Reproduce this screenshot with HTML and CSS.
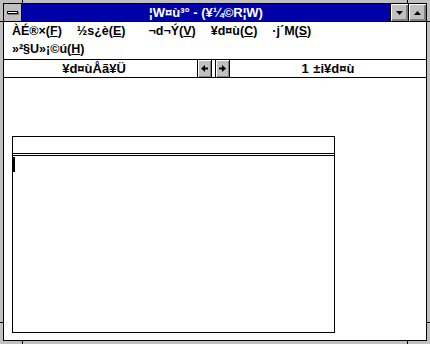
FILE: index.html
```html
<!DOCTYPE html>
<html lang="en">
<head>
    <meta charset="UTF-8">
    <meta name="viewport" content="width=device-width, initial-scale=1.0">
    <title>Cardfile</title>
    <link rel="stylesheet" href="styles.css">
</head>
<body>
    <div class="window">
        <div class="inner">
            <div class="titlebar">
                <div class="sysmenu"><span class="dash"></span></div>
                <div class="title">¦W¤ù³° - (¥¼©R¦W)</div>
                <div class="tbtn">
                    <svg width="7" height="4" viewBox="0 0 7 4"><path d="M0 0H7L3.5 4Z" fill="#000"/></svg>
                </div>
                <div class="tbtn">
                    <svg width="7" height="4" viewBox="0 0 7 4"><path d="M0 4H7L3.5 0Z" fill="#000"/></svg>
                </div>
            </div>
            <div class="menu">
                <div class="menu-row">
                    <span class="item">ÀÉ®×(<u>F</u>)</span>
                    <span class="item edit">½s¿è(<u>E</u>)</span>
                    <span class="item">¬d¬Ý(<u>V</u>)</span>
                    <span class="item">¥d¤ù(<u>C</u>)</span>
                    <span class="item">·j´M(<u>S</u>)</span>
                </div>
                <div class="menu-row">
                    <span class="item">»²§U»¡©ú(<u>H</u>)</span>
                </div>
            </div>
            <div class="toolbar">
                <div class="view-label">¥d¤ùÅã¥Ü</div>
                <div class="arrows">
                    <div class="abtn">
                        <svg width="7" height="7" viewBox="0 0 7 7"><path d="M0 3.5L4 0V2.5H7V4.5H4V7Z" fill="#000"/></svg>
                    </div>
                    <div class="abtn">
                        <svg width="7" height="7" viewBox="0 0 7 7"><path d="M7 3.5L3 0V2.5H0V4.5H3V7Z" fill="#000"/></svg>
                    </div>
                </div>
                <div class="count">1 ±i¥d¤ù</div>
            </div>
            <div class="client">
                <div class="card">
                    <div class="card-head"></div>
                    <div class="card-body"><span class="caret"></span></div>
                </div>
            </div>
        </div>
    </div>
</body>
</html>
```

FILE: styles.css
```css
body {
    margin: 0;
    padding: 0;
    font-family: "Liberation Sans", Arial, sans-serif;
    font-weight: bold;
    font-size: 12px;
    background-color: #fff;
}
.window {
    width: 430px;
    height: 344px;
    box-sizing: border-box;
    padding: 3px;
    background-color: #c0c0c0;
    /* little notches on the frame corners */
    background-image:
        linear-gradient(#000, #000),
        linear-gradient(#000, #000),
        linear-gradient(#000, #000),
        linear-gradient(#000, #000);
    background-repeat: no-repeat;
    background-size: 1px 100%, 1px 100%, 100% 1px, 100% 1px;
    background-position: 22px 0, 407px 0, 0 21px, 0 322px;
}
.inner {
    height: 100%;
    box-sizing: border-box;
    border: 1px solid #000;
    display: flex;
    flex-direction: column;
    background-color: #fff;
}
.titlebar {
    display: flex;
    height: 17px;
    border-bottom: 1px solid #000;
    background-color: #0000a8;
    color: #fff;
}
.sysmenu {
    width: 17px;
    background-color: #c0c0c0;
    border-right: 1px solid #000;
    display: flex;
    align-items: center;
    justify-content: center;
}
.dash {
    width: 9px;
    height: 1px;
    background-color: #fff;
    border: 1px solid #000;
    box-shadow: 1px 1px 0 #808080;
}
.title {
    flex: 1;
    text-align: center;
    line-height: 17px;
    font-size: 13px;
}
.tbtn {
    width: 17px;
    border-left: 1px solid #000;
    background-color: #c0c0c0;
    box-shadow: inset 1px 1px 0 #fff, inset -1px -1px 0 #808080, inset -2px -2px 0 #808080;
    display: flex;
    align-items: center;
    justify-content: center;
}
.menu {
    padding-bottom: 1px;
}
.menu-row {
    display: flex;
    height: 18px;
    line-height: 18px;
    font-size: 12.5px;
    padding-left: 1px;
}
.item {
    padding: 0 7px;
    margin-right: 1px;
    color: #000;
}
.item.edit {
    padding-right: 15px;
}
.toolbar {
    display: flex;
    height: 17px;
    border-top: 1px solid #000;
    border-bottom: 1px solid #000;
    line-height: 17px;
    font-size: 13px;
}
.view-label {
    width: 180px;
    text-align: center;
}
.arrows {
    display: flex;
    gap: 3px;
    margin-left: 13px;
}
.abtn {
    width: 13px;
    border-left: 1px solid #000;
    border-right: 1px solid #000;
    background-color: #c0c0c0;
    box-shadow: inset 1px 1px 0 #fff, inset -1px -1px 0 #808080;
    display: flex;
    align-items: center;
    justify-content: center;
}
.count {
    flex: 1;
    text-align: center;
    word-spacing: 1px;
}
.client {
    flex: 1;
    padding: 58px 0 0 8px;
}
.card {
    width: 323px;
    height: 197px;
    box-sizing: border-box;
    border: 1px solid #000;
}
.card-head {
    height: 16px;
    border-bottom: 3px double #000;
}
.card-body {
    padding-top: 1px;
}
.caret {
    display: block;
    width: 2px;
    height: 15px;
    background-color: #000;
}
```
